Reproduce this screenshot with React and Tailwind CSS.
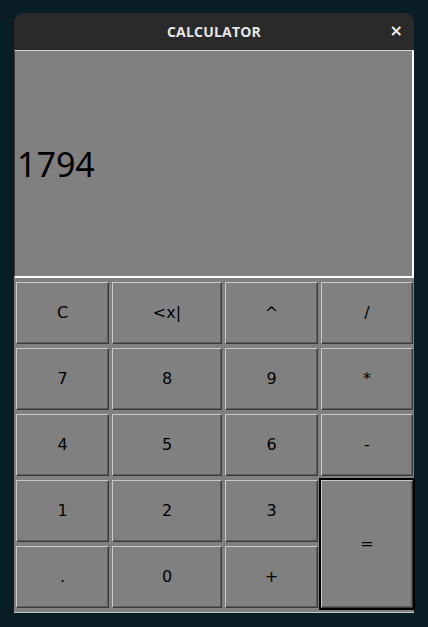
const KEYS = [
  { label: 'C' },
  { label: '<x|' },
  { label: '^' },
  { label: '/' },
  { label: '7' },
  { label: '8' },
  { label: '9' },
  { label: '*' },
  { label: '4' },
  { label: '5' },
  { label: '6' },
  { label: '-' },
  { label: '1' },
  { label: '2' },
  { label: '3' },
  { label: '=', tall: true },
  { label: '.' },
  { label: '0' },
  { label: '+' },
]

function Key({ label, tall }) {
  return (
    <button
      className={`flex items-center justify-center bg-[#808080] border border-t-[#cacaca] border-l-[#cacaca] border-b-[#3a3a3a] border-r-[#3a3a3a] shadow-[inset_-1px_-1px_0_#5c5c5c] text-black text-[16px] leading-none ${tall ? 'row-span-2 outline-2 outline-black' : ''}`}
      style={{ fontFamily: '"DejaVu Sans", sans-serif' }}
    >
      {label}
    </button>
  )
}

export default function App() {
  return (
    <div className="w-[428px] h-[627px] bg-[#081d24] pt-[13px] pl-[14px]">
      <div className="w-[400px] flex flex-col">
        {/* title bar */}
        <div className="h-[37px] bg-[#2a2a2a] rounded-t-[9px] flex items-center justify-center relative">
          <span
            className="text-[#e6e6e6] text-[14px] font-bold tracking-[0.2px]"
            style={{ fontFamily: '"Open Sans", sans-serif' }}
          >
            CALCULATOR
          </span>
          <span
            className="absolute right-[11px] top-[10px] text-[#f0f0f0] text-[16px] font-bold leading-none"
            style={{ fontFamily: '"DejaVu Sans", sans-serif' }}
          >
            ×
          </span>
        </div>

        <div className="bg-[#808080] border-b border-b-[#c8c8c8]">
          {/* display */}
          <div className="h-[228px] flex items-center border-t border-t-[#d0d0d0] border-l border-l-[#3c3c3c] border-r-2 border-r-white border-b-2 border-b-white">
            <span
              className="text-black text-[34px] leading-none pl-[2px]"
              style={{ fontFamily: '"Noto Sans", sans-serif' }}
            >
              1794
            </span>
          </div>

          {/* keypad */}
          <div className="pt-[4px] pb-[4px] pl-[2px] grid grid-cols-[93px_110px_93px_92px] auto-rows-[62px] gap-x-[3px] gap-y-[4px]">
            {KEYS.map((k) => (
              <Key key={k.label} {...k} />
            ))}
          </div>
        </div>
      </div>
    </div>
  )
}
